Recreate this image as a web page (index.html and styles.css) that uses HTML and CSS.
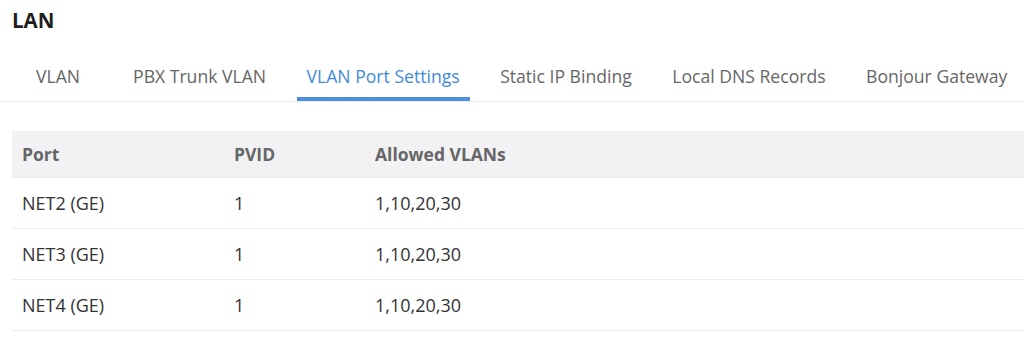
FILE: index.html
```html
<!DOCTYPE html>
<html>
<head>
<meta charset="utf-8">
<link rel="stylesheet" href="styles.css">
</head>
<body>
<div class="page">
  <h1 class="title">LAN</h1>
  <nav class="tabs">
    <div class="tab tab-first">VLAN</div>
    <div class="tab">PBX Trunk VLAN</div>
    <div class="tab active">VLAN Port Settings</div>
    <div class="tab">Static IP Binding</div>
    <div class="tab">Local DNS Records</div>
    <div class="tab">Bonjour Gateway</div>
  </nav>
  <table class="grid">
    <thead>
      <tr><th class="c1">Port</th><th class="c2">PVID</th><th>Allowed VLANs</th></tr>
    </thead>
    <tbody>
      <tr><td>NET2 (GE)</td><td>1</td><td>1,10,20,30</td></tr>
      <tr><td>NET3 (GE)</td><td>1</td><td>1,10,20,30</td></tr>
      <tr><td>NET4 (GE)</td><td>1</td><td>1,10,20,30</td></tr>
    </tbody>
  </table>
</div>
</body>
</html>
```
FILE: styles.css
```css
html, body {
  margin: 0;
  padding: 0;
  background: #fff;
}
body {
  font-family: "Open Sans", "Liberation Sans", sans-serif;
  color: #333;
}
.page {
  padding: 0 0 0 12px;
  overflow: hidden;
}
.title {
  margin: 0;
  padding-top: 6px;
  font-size: 20.5px;
  font-weight: 700;
  line-height: 28px;
  color: #1f1f1f;
}
.tabs {
  display: flex;
  margin-top: 19px;
  margin-left: -12px;
  padding-left: 26px;
  border-bottom: 1px solid #ececec;
  height: 49px;
  box-sizing: border-box;
  white-space: nowrap;
}
.tab {
  padding: 9px 10px 0;
  margin-right: 20.5px;
  font-size: 17.6px;
  line-height: 28px;
  color: #666;
  border-bottom: 4px solid transparent;
  height: 48px;
  box-sizing: border-box;
  flex-shrink: 0;
}
.tab-first {
  margin-right: 33px;
}
.tab.active {
  color: #3f8ad9;
  border-bottom-color: #4a90e2;
}
.grid {
  margin-top: 29px;
  width: 1012px;
  border-collapse: collapse;
  font-size: 18px;
}
.grid th {
  background: #f2f2f4;
  text-align: left;
  font-weight: 700;
  font-size: 17.5px;
  color: #666;
  height: 46px;
  padding: 0 0 0 10px;
  border-bottom: 1px solid #e8e8ea;
}
.grid td {
  height: 50px;
  padding: 0 0 0 10px;
  color: #333;
  border-bottom: 1px solid #ececec;
}
.grid .c1 { width: 202px; }
.grid .c2 { width: 131px; }
```
